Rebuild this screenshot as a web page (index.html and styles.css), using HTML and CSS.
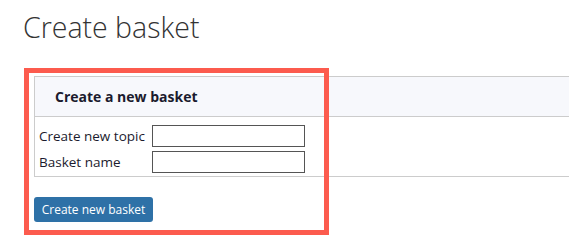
FILE: index.html
```html
<!DOCTYPE html>
<html>
<head>
<meta charset="utf-8">
<link rel="stylesheet" href="styles.css">
</head>
<body>
<h1 class="title">Create basket</h1>
<div class="area">
  <div class="panel">
    <div class="panel-head">Create a new basket</div>
    <div class="panel-body">
      <label class="lbl" for="topic">Create new topic</label>
      <input class="field" id="topic" type="text">
      <label class="lbl" for="name">Basket name</label>
      <input class="field" id="name" type="text">
    </div>
  </div>
  <button class="btn" type="button">Create new basket</button>
  <div class="highlight"></div>
</div>
</body>
</html>
```
FILE: styles.css
```css
html {
  overflow: hidden;
}
body {
  margin: 0;
  padding: 0;
  min-height: 238px;
  background: #fff;
  font-family: "Open Sans", "Liberation Sans", sans-serif;
  color: #1c1c2c;
}
.title {
  margin: 0;
  padding: 9px 0 0 23px;
  font-size: 28.5px;
  font-weight: 300;
  line-height: 37px;
  color: #333;
}
.area {
  position: relative;
  margin-top: 30px;
  padding-left: 34px;
  padding-bottom: 12px;
}
.panel {
  border-top: 1px solid #cccccc;
  border-bottom: 1px solid #cccccc;
  border-left: 1px solid #cccccc;
}
.panel-head {
  height: 39px;
  line-height: 39px;
  background: #f7f8fc;
  border-bottom: 1px solid #cccccc;
  padding-left: 20px;
  font-size: 14px;
  font-weight: 700;
  color: #1b1b2e;
}
.panel-body {
  display: grid;
  grid-template-columns: 113px 153px;
  row-gap: 4px;
  align-items: center;
  padding: 8px 0 3px 4px;
  font-size: 13.5px;
}
.lbl {
  white-space: nowrap;
  color: #1b1b2e;
}
.field {
  box-sizing: border-box;
  width: 153px;
  height: 22px;
  margin: 0;
  border: 1px solid #555;
  border-radius: 0;
  padding: 0 2px;
  background: #fff;
}
.btn {
  display: block;
  margin-top: 20px;
  box-sizing: border-box;
  width: 119px;
  height: 25px;
  padding: 0;
  border: none;
  border-radius: 3px;
  background: #2e71a7;
  color: #fff;
  font-family: "Open Sans", "Liberation Sans", sans-serif;
  font-size: 12px;
}
.highlight {
  position: absolute;
  left: 24px;
  top: -8px;
  width: 305px;
  height: 167px;
  box-sizing: border-box;
  border: 5px solid #fc5b4e;
  pointer-events: none;
}
```
